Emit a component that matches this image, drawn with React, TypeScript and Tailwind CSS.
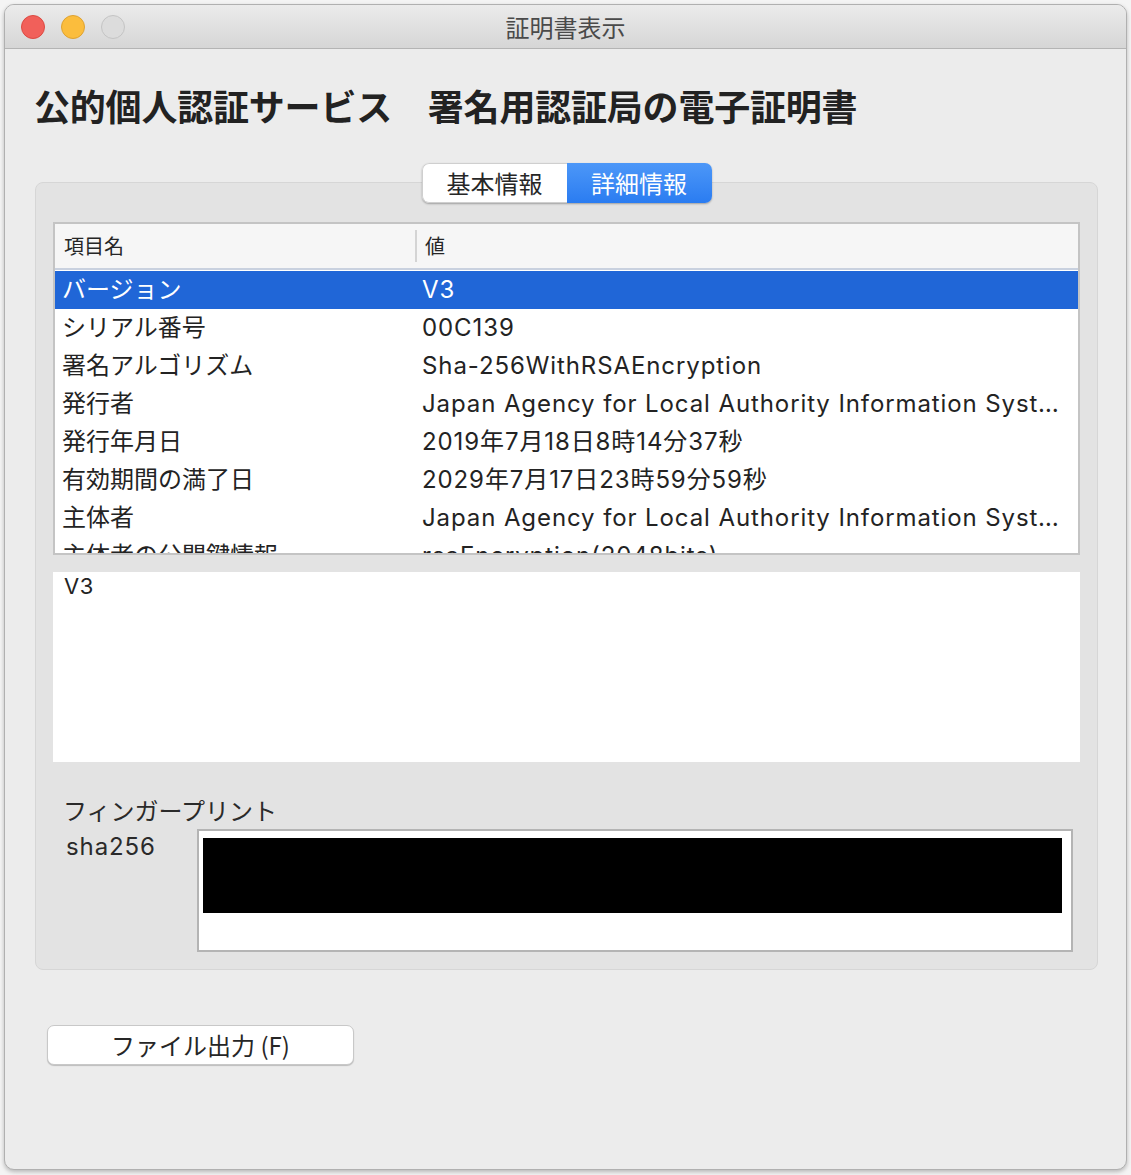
import React from "react";

const rows: [string, string][] = [
  ["バージョン", "V3"],
  ["シリアル番号", "00C139"],
  ["署名アルゴリズム", "Sha-256WithRSAEncryption"],
  ["発行者", "Japan Agency for Local Authority Information Systems"],
  ["発行年月日", "2019年7月18日8時14分37秒"],
  ["有効期間の満了日", "2029年7月17日23時59分59秒"],
  ["主体者", "Japan Agency for Local Authority Information Systems"],
  ["主体者の公開鍵情報", "rsaEncryption(2048bits)"],
];

export default function App() {
  return (
    <div className="w-[1131px] h-[1175px] bg-[#f4f4f4] pt-[4px] pl-[4px] font-['Inter','Noto_Sans_CJK_JP',sans-serif] text-[#232323] overflow-hidden">
      <div className="w-[1123px] h-[1166px] rounded-[10px] border border-[#b0b0b0] bg-[#ececec] overflow-hidden flex flex-col shadow-[0_2px_4px_rgba(0,0,0,0.25)]">
        {/* Title bar */}
        <div className="relative h-[44px] shrink-0 bg-gradient-to-b from-[#ebebeb] to-[#d6d6d6] border-b border-[#b4b4b4] flex items-center justify-center">
          <div className="absolute left-[16px] top-[10px] flex gap-[16px]">
            <div className="w-[24px] h-[24px] rounded-full bg-[#f1605a] border border-[#dc4a42]" />
            <div className="w-[24px] h-[24px] rounded-full bg-[#fbbd3d] border border-[#dea232]" />
            <div className="w-[24px] h-[24px] rounded-full bg-[#dcdcdc] border border-[#c4c4c4]" />
          </div>
          <span className="text-[24px] leading-none text-[#4a4a4a] font-['Noto_Sans_CJK_JP',sans-serif]">証明書表示</span>
        </div>

        {/* Heading */}
        <h1 className="mt-[34px] ml-[29px] text-[36px] leading-[44px] font-bold text-[#222] font-['Noto_Sans_CJK_JP',sans-serif] whitespace-pre tracking-[-0.2px]">
          公的個人認証サービス　署名用認証局の電子証明書
        </h1>

        {/* Group box */}
        <div className="mt-[55px] ml-[30px] w-[1063px] h-[788px] rounded-[8px] bg-[#e3e3e3] border border-[#d6d6d6] flex flex-col">
          {/* Tabs */}
          <div className="-mt-[20px] flex justify-center">
            <div className="flex h-[40px] rounded-[7px] shadow-[0_1px_2px_rgba(0,0,0,0.3)] overflow-hidden text-[24px] leading-none font-['Noto_Sans_CJK_JP',sans-serif]">
              <div className="w-[145px] bg-white border border-[#cfcfcf] border-r-0 rounded-l-[7px] flex items-center justify-center text-[#262626]">
                基本情報
              </div>
              <div className="w-[145px] bg-gradient-to-b from-[#4c97f8] to-[#2a7cf1] flex items-center justify-center text-white">
                詳細情報
              </div>
            </div>
          </div>

          {/* Table */}
          <div className="mt-[19px] mx-[17px] h-[333px] border-2 border-[#c4c4c4] bg-white overflow-hidden">
            <div className="h-[46px] bg-[#f6f6f6] border-b-2 border-[#c9d1df] flex items-center text-[20px] text-[#262626] font-['Noto_Sans_CJK_JP',sans-serif]">
              <div className="w-[360px] pl-[9px]">項目名</div>
              <div className="w-[2px] h-[32px] bg-[#d4d4d4]" />
              <div className="pl-[8px]">値</div>
            </div>
            <div className="text-[24px] pt-[1px]">
              {rows.map(([k, v], i) => (
                <div
                  key={k}
                  className={
                    i === 0
                      ? "h-[38px] flex items-center bg-[#2066d7] text-white"
                      : "h-[38px] flex items-center"
                  }
                >
                  <div className="w-[361px] pl-[7px] whitespace-nowrap">{k}</div>
                  <div className="pl-[6px] w-[652px] whitespace-nowrap overflow-hidden text-ellipsis tracking-[0.9px]">{v}</div>
                </div>
              ))}
            </div>
          </div>

          {/* Detail box */}
          <div className="mt-[17px] mx-[17px] h-[190px] bg-white pl-[11px] text-[22px] leading-[28px] tracking-[0.5px]">
            V3
          </div>

          {/* Fingerprint */}
          <div className="mt-[32px] ml-[27px] text-[24px] leading-[32px] text-[#2a2a2a] font-['Noto_Sans_CJK_JP',sans-serif]">
            フィンガープリント
          </div>
          <div className="mt-[3px] flex">
            <div className="w-[161px] pl-[30px] mt-[2px] text-[24px] leading-[32px] text-[#2a2a2a] tracking-[0.9px]">sha256</div>
            <div className="w-[876px] h-[123px] bg-white border-2 border-[#b4b4b4] pt-[7px] pl-[4px]">
              <div className="w-[859px] h-[75px] bg-black" />
            </div>
          </div>
        </div>

        {/* Button */}
        <div className="mt-[55px] ml-[42px]">
          <button className="w-[307px] h-[40px] rounded-[7px] bg-white border border-[#c8c8c8] shadow-[0_1px_1px_rgba(0,0,0,0.2)] text-[24px] leading-none text-[#262626] font-['Noto_Sans_CJK_JP',sans-serif] flex items-center justify-center">
            ファイル出力 (F)
          </button>
        </div>
      </div>
    </div>
  );
}
